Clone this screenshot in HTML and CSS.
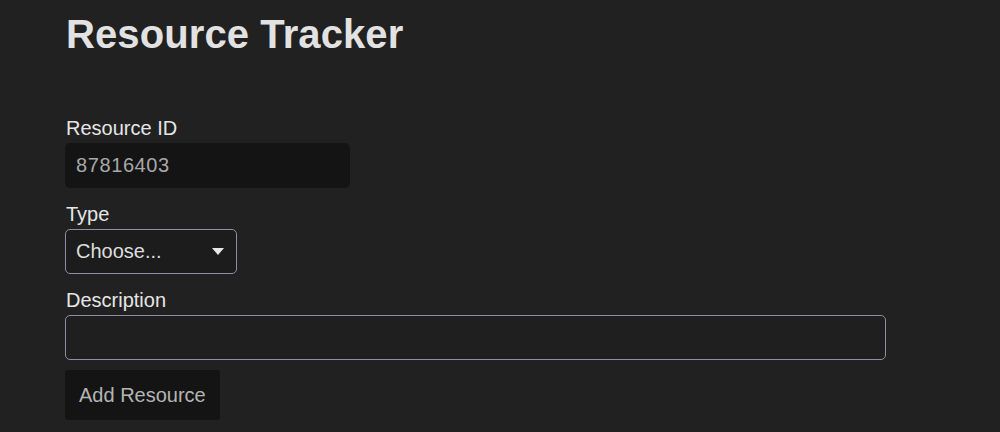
FILE: index.html
```html
<!DOCTYPE html>
<html lang="en">
<head>
<meta charset="utf-8">
<title>Resource Tracker</title>
<link rel="stylesheet" href="styles.css">
</head>
<body>
<main class="page">
  <h1 class="title">Resource Tracker</h1>
  <form class="form">
    <div class="field">
      <label class="label" for="rid">Resource ID</label>
      <input class="input input-id" id="rid" type="text" value="87816403" readonly>
    </div>
    <div class="field">
      <label class="label" for="type">Type</label>
      <div class="select">
        <span class="select-text">Choose...</span>
        <svg class="caret" width="12" height="7" viewBox="0 0 12 7"><path d="M0 0 H12 L6 7 Z" fill="#e8e8e8"/></svg>
      </div>
    </div>
    <div class="field">
      <label class="label" for="desc">Description</label>
      <input class="input input-desc" id="desc" type="text">
    </div>
    <button class="btn" type="button">Add Resource</button>
  </form>
</main>
</body>
</html>
```
FILE: styles.css
```css
html, body {
  margin: 0;
  background: #212121;
}
body {
  font-family: "Liberation Sans", Arial, sans-serif;
  color: #e4e4e4;
}
.page {
  padding: 10px 0 0 65px;
}
.title {
  margin: 0 0 55px 1px;
  font-size: 40px;
  line-height: 48px;
  font-weight: 700;
  letter-spacing: 0.1px;
  color: #e2e2e2;
}
.form {
  display: flex;
  flex-direction: column;
  align-items: flex-start;
}
.field {
  display: flex;
  flex-direction: column;
  align-items: flex-start;
  margin-bottom: 11px;
}
.field:nth-child(3) {
  margin-bottom: 10px;
}
.label {
  font-size: 20px;
  line-height: 30px;
  color: #e6e6e6;
  padding-left: 1px;
}
.input {
  box-sizing: border-box;
  height: 45px;
  font-family: inherit;
  font-size: 20px;
  outline: none;
  border-radius: 5px;
}
.input-id {
  width: 285px;
  border: none;
  background: #141414;
  color: #a8a8a8;
  padding: 0 11px;
  letter-spacing: 0.6px;
}
.input-desc {
  width: 821px;
  border: 1.5px solid #8e8ea2;
  background: #1f1f1f;
  color: #ddd;
  padding: 0 10px;
}
.select {
  box-sizing: border-box;
  width: 172px;
  height: 45px;
  border: 1.5px solid #8e8ea2;
  border-radius: 5px;
  background: #1c1c1c;
  display: flex;
  align-items: center;
  justify-content: space-between;
  padding: 0 12px 0 10px;
}
.select-text {
  font-size: 20px;
  color: #dedede;
}
.caret {
  display: block;
}
.btn {
  box-sizing: border-box;
  height: 50px;
  padding: 0 14px;
  border: none;
  border-radius: 3px;
  background: #141414;
  color: #b4b4b4;
  font-family: inherit;
  font-size: 20px;
}
```
